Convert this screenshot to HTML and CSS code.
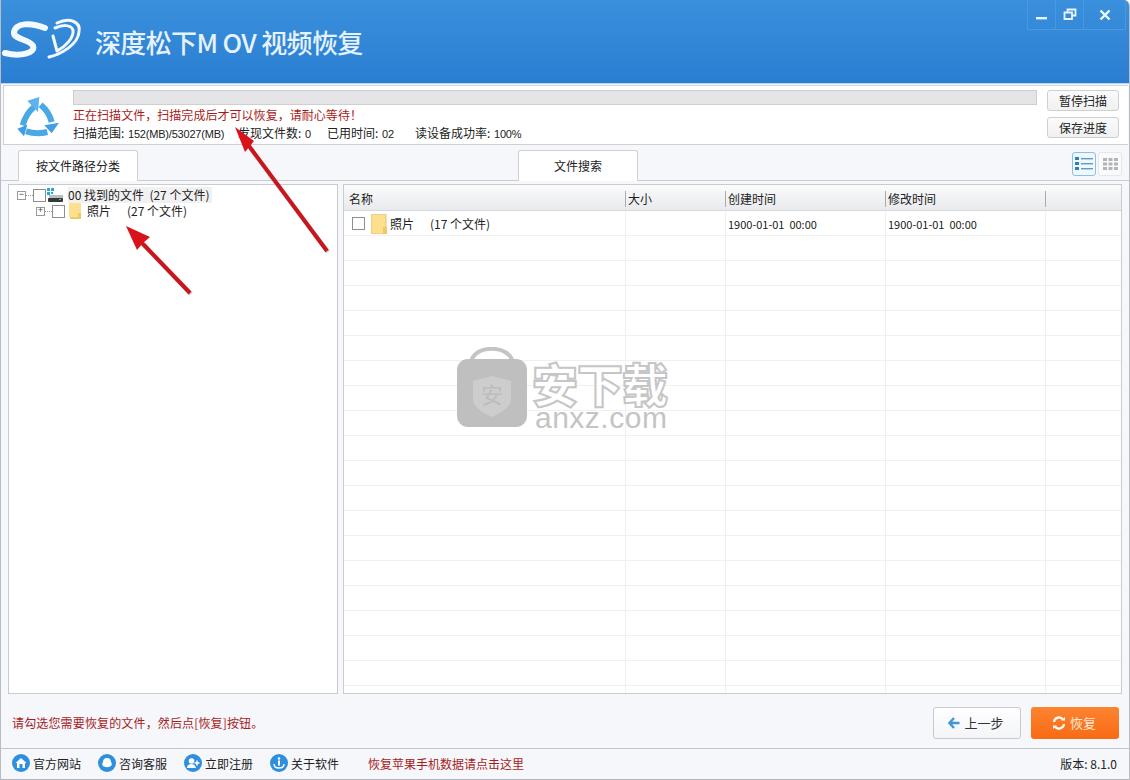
FILE: index.html
```html
<!DOCTYPE html>
<html lang="zh-CN">
<head>
<meta charset="utf-8">
<title>深度松下MOV视频恢复</title>
<link rel="stylesheet" href="styles.css">
</head>
<body>
<div class="window">
  <header class="titlebar">
    <svg class="logo" viewBox="0 0 90 55" width="90" height="55">
      <path d="M45 14C30 8 16 9 14 18C13 26 30 25 33 32C36 39 20 43 5 39" class="swoosh"/>
      <path d="M57 9C70 3 81 8 79 18C78 30 62 40 49 43" class="swoosh thin"/>
      <path d="M55 14C62 11 71 10 73 16C74 24 66 32 57 37L53 22" class="swoosh thin"/>
    </svg>
    <h1 class="app-title">深度松下M OV 视频恢复</h1>
    <div class="win-controls">
      <span class="win-btn"><svg width="14" height="14" viewBox="0 0 14 14"><rect x="1" y="9" width="11" height="2.4" fill="#e8f4ff"/></svg></span>
      <span class="win-btn"><svg width="14" height="14" viewBox="0 0 14 14"><path d="M4.5 4V1.5H12.5V7.5H9.5M1.5 4.5H9V11H1.5Z" fill="none" stroke="#e8f4ff" stroke-width="1.8"/></svg></span>
      <span class="win-btn"><svg width="14" height="14" viewBox="0 0 14 14"><path d="M2.5 2.5L11.5 11.5M11.5 2.5L2.5 11.5" stroke="#f2f9ff" stroke-width="2.4"/></svg></span>
    </div>
  </header>

  <section class="scan">
    <svg class="scan-icon" viewBox="0 0 180 156" width="60" height="52">
      <g class="recycle-stroke">
        <path d="M38 100Q48 65 72 45"/>
        <path d="M92 38Q118 60 125 90"/>
        <path d="M112 120Q80 128 48 118"/>
      </g>
      <path d="M88 15L52 26L84 60Z" fill="#5db4ec"/>
      <path d="M125 124L147 92L103 100Z" fill="#3f9fe4"/>
      <path d="M22 110L52 98L42 133Z" fill="#3f9fe4"/>
    </svg>
    <div class="scan-info">
      <div class="progress"></div>
      <p class="scan-msg">正在扫描文件，扫描完成后才可以恢复，请耐心等待！</p>
      <p class="scan-stats">
        <span class="stat-range">扫描范围: <span class="num">152(MB)/53027(MB)</span></span>
        <span class="stat-found">发现文件数: <span class="num">0</span></span>
        <span class="stat-time">已用时间: <span class="num">02</span></span>
        <span>读设备成功率: <span class="num">100%</span></span>
      </p>
    </div>
    <div class="scan-actions">
      <button class="small-btn">暂停扫描</button>
      <button class="small-btn">保存进度</button>
    </div>
  </section>

  <nav class="tabs">
    <div class="tab tab-path">按文件路径分类</div>
    <div class="tab tab-search">文件搜索</div>
    <div class="views">
      <span class="view active">
        <svg width="18" height="14" viewBox="0 0 18 14"><g fill="#2f7fb8"><rect x="0" y="0" width="4" height="3"/><rect x="0" y="5" width="4" height="3"/><rect x="0" y="10" width="4" height="3"/></g><g fill="#5b9cc9"><rect x="6" y="1" width="12" height="1.4"/><rect x="6" y="6" width="12" height="1.4"/><rect x="6" y="11" width="12" height="1.4"/></g></svg>
      </span>
      <span class="view">
        <svg width="15" height="12" viewBox="0 0 15 12"><g fill="#b4b4b4"><rect width="4" height="3"/><rect x="5.5" width="4" height="3"/><rect x="11" width="4" height="3"/><rect y="4.5" width="4" height="3"/><rect x="5.5" y="4.5" width="4" height="3"/><rect x="11" y="4.5" width="4" height="3"/><rect y="9" width="4" height="3"/><rect x="5.5" y="9" width="4" height="3"/><rect x="11" y="9" width="4" height="3"/></g></svg>
      </span>
    </div>
  </nav>

  <main class="panes">
    <aside class="tree">
      <div class="tree-row">
        <span class="expander">−</span><span class="dots"></span>
        <span class="check"></span>
        <svg class="drive" width="16" height="14" viewBox="0 0 16 14"><g fill="#2aa6d8"><rect width="3" height="3"/><rect x="4" y="0" width="3" height="3"/><rect y="4" width="3" height="3"/><rect x="4" y="4" width="2" height="2"/></g><rect x="2" y="7" width="14" height="3" fill="#b9bec2"/><rect x="1" y="10" width="15" height="4" rx="1" fill="#33393c"/><rect x="12" y="11" width="2" height="1" fill="#5fd35f"/></svg>
        <span class="tree-label sel">00 找到的文件&nbsp; (27 个文件)</span>
      </div>
      <div class="tree-row child">
        <span class="expander">+</span><span class="dots"></span>
        <span class="check"></span>
        <svg class="folder" width="13" height="16" viewBox="0 0 13 16"><path d="M0 0H12V14H0Z" fill="#fde08d"/><path d="M12 10V16H1V14H9V10Z" fill="#f1c868"/></svg>
        <span class="tree-label name">照片</span><span class="tree-label">(27 个文件)</span>
      </div>
    </aside>
    <section class="list">
      <div class="list-head">
        <span class="c1">名称</span><span class="c2">大小</span><span class="c3">创建时间</span><span class="c4">修改时间</span><span class="c5"></span>
      </div>
      <div class="list-body">
        <div class="list-row">
          <span class="c1 name-cell">
            <span class="check"></span>
            <svg class="folder" width="16" height="20" viewBox="0 0 16 20"><path d="M0 0H15V20H0Z" fill="#fde08d"/><path d="M0 0H15V20H0Z" fill="none" stroke="#e2c27a"/><path d="M16 13V20H12V13Z" fill="#f1c868"/></svg>
            <span class="file-name">照片</span><span>(17 个文件)</span>
          </span>
          <span class="c2"></span>
          <span class="c3">1900-01-01&nbsp; 00:00</span>
          <span class="c4">1900-01-01&nbsp; 00:00</span>
          <span class="c5"></span>
        </div>
      </div>
    </section>
  </main>

  <section class="actions">
    <p class="hint">请勾选您需要恢复的文件，然后点[恢复]按钮。</p>
    <div class="action-btns">
      <button class="btn prev">
        <svg width="12" height="12" viewBox="0 0 12 12"><path d="M6 1L1.5 6L6 11M2 6H11.5" fill="none" stroke="#3f97d8" stroke-width="2.4"/></svg>
        上一步
      </button>
      <button class="btn recover">
        <svg width="14" height="14" viewBox="0 0 14 14"><path d="M2 6A5 5 0 0 1 11 3.5M12 8A5 5 0 0 1 3 10.5" fill="none" stroke="#fff" stroke-width="2.2"/><path d="M9 4.5H13V1ZM5 9.5H1V13Z" fill="#fff"/></svg>
        恢复
      </button>
    </div>
  </section>

  <footer class="status">
    <a class="link"><svg width="18" height="18" viewBox="0 0 18 18"><circle cx="9" cy="9" r="9" fill="#2f8fdc"/><path d="M3.5 9L9 4L14.5 9H13V14H5V9Z" fill="#fff"/><rect x="7.5" y="10" width="3" height="4" fill="#2f8fdc"/></svg>官方网站</a>
    <a class="link"><svg width="18" height="18" viewBox="0 0 18 18"><circle cx="9" cy="9" r="9" fill="#2f8fdc"/><path d="M9 4C12 4 13 6 13 8C14 9 14 11 13 12C11 13.500 7 13.500 5 12C4 11 4 9 5 8C5 6 6 4 9 4Z" fill="#fff"/></svg>咨询客服</a>
    <a class="link"><svg width="18" height="18" viewBox="0 0 18 18"><circle cx="9" cy="9" r="9" fill="#2f8fdc"/><circle cx="7.500" cy="7" r="2.800" fill="#fff"/><path d="M3 14C3 11 5 10 7.500 10S11 11 12 14Z" fill="#fff"/><path d="M13 6.500V11.500M10.500 9H15.500" stroke="#fff" stroke-width="1.500"/></svg>立即注册</a>
    <a class="link"><svg width="18" height="18" viewBox="0 0 18 18"><circle cx="9" cy="9" r="9" fill="#2f8fdc"/><circle cx="9" cy="4.500" r="1.300" fill="#fff"/><rect x="8" y="6.500" width="2" height="5" fill="#fff"/><path d="M4 10C4 13 6 14 9 14S14 13 14 10" fill="none" stroke="#fff" stroke-width="1.400"/></svg>关于软件</a>
    <a class="apple-link">恢复苹果手机数据请点击这里</a>
    <span class="version">版本: 8.1.0</span>
  </footer>

  <div class="watermark" aria-hidden="true">
    <svg width="76" height="80" viewBox="0 0 76 80">
      <path d="M17 16C19 -3 56 -3 59 16" fill="none" stroke="#c4c4c4" stroke-width="4"/>
      <rect x="0" y="12" width="70" height="68" rx="11" fill="#bfbfbf" transform="translate(3 0)"/>
      <path d="M38 29L57 34V52C57 60 47 66 38 70C29 66 19 60 19 52V34Z" fill="#cdcdcd"/>
      <text x="38" y="56" class="wm-shield">安</text>
    </svg>
    <div class="wm-text">
      <div class="wm-cn">安下载</div>
      <div class="wm-en">anxz.com</div>
    </div>
  </div>

  <svg class="arrows" width="1130" height="780" viewBox="0 0 1130 780" aria-hidden="true">
    <g class="arrow-shadow">
      <path d="M328 252L251 149"/>
      <path d="M191 294L144 245"/>
    </g>
    <g class="arrow-line">
      <path d="M327 251L249 146"/>
      <path d="M190 293L142 243"/>
    </g>
    <path d="M235 127L254 141L250 146L245 152Z" fill="#d8141a"/>
    <path d="M126 226L150 237L143 243L137 250Z" fill="#d8141a"/>
  </svg>
</div>
</body>
</html>
```
FILE: styles.css
```css
* { box-sizing: border-box; }
html, body { margin: 0; padding: 0; }
body {
  width: 1130px;
  height: 780px;
  overflow: hidden;
  background: #fff;
  font-family: "Noto Sans CJK SC", "Noto Sans", sans-serif;
  font-size: 12px;
  color: #222;
}
p, h1 { margin: 0; font-weight: normal; }

.window {
  position: relative;
  width: 1130px;
  height: 780px;
  display: flex;
  flex-direction: column;
  background: #f5f7fb;
  border-left: 1px solid #b9bcc2;
  border-right: 1px solid #b9bcc2;
  border-bottom: 1px solid #b4b7bd;
  border-top-right-radius: 6px;
  overflow: hidden;
}

.titlebar {
  flex: none;
  height: 84px;
  display: flex;
  align-items: center;
  position: relative;
  background: linear-gradient(#3a90dc, #2a7ed2);
  border-bottom: 1px solid #b8d2ea;
}
.logo { flex: none; margin: 0 0 0 -1px; }
.swoosh { fill: none; stroke: #f2f9ff; stroke-width: 6; stroke-linecap: round; stroke-linejoin: round; }
.thin { stroke-width: 3; }
.app-title {
  margin-left: 5px;
  font-size: 26px;
  font-weight: 500;
  color: #e6f2fc;
  letter-spacing: -0.65px;
  white-space: nowrap;
}
.win-controls {
  position: absolute;
  top: 0;
  right: 3px;
  display: flex;
  height: 30px;
  border: 1px solid #4a98de;
  border-top: 0;
}
.win-btn {
  width: 28px;
  display: flex;
  align-items: center;
  justify-content: center;
  border-right: 1px solid #4a98de;
}
.win-btn:last-child { width: 41px; border-right: 0; }

.scan {
  flex: none;
  height: 60px;
  margin: 1px 1px 0 2px;
  display: flex;
  background: #fff;
  border: 1px solid #d0d0d0;
  border-width: 1px 0 1px 1px;
  position: relative;
}
.scan-icon { flex: none; margin: 6px 0 0 6px; }
.scan-info { flex: none; width: 964px; margin-left: 3px; padding-top: 4px; }
.progress { height: 15px; background: #e5e4e6; border: 1px solid #cfcfcf; }
.scan-msg { margin-top: 1px; color: #a81b1b; font-size: 12px; line-height: 17px; letter-spacing: 0.04px; }
.scan-stats { display: flex; font-size: 12px; line-height: 17px; margin-top: 1px; white-space: nowrap; }
.num { font-family: "Liberation Sans", sans-serif; font-size: 11px; letter-spacing: -0.2px; margin-left: 1px; }
.stat-range { width: 165px; }
.stat-found { width: 89px; }
.stat-time { width: 88px; }
.scan-actions {
  flex: none;
  margin-left: 10px;
  padding-top: 4px;
  display: flex;
  flex-direction: column;
  gap: 6px;
}
.small-btn {
  width: 72px;
  height: 21px;
  padding: 0;
  font: 12px "Noto Sans CJK SC", sans-serif;
  color: #222;
  background: linear-gradient(#fbfbfb, #f0f0f0);
  border: 1px solid #cfcfcf;
  border-radius: 3px;
}

.tabs {
  flex: none;
  height: 36px;
  display: flex;
  align-items: flex-end;
  padding-left: 17px;
  border-bottom: 1px solid #c9cbce;
  position: relative;
}
.tab {
  width: 120px;
  height: 31px;
  margin-bottom: -1px;
  text-align: center;
  line-height: 30px;
  background: #fff;
  border: 1px solid #cfd1d4;
  border-bottom: 0;
  border-radius: 3px 3px 0 0;
}
.tab-search { margin-left: 380px; }
.views {
  position: absolute;
  right: 7px;
  top: 7px;
  display: flex;
  gap: 2px;
}
.view {
  width: 24px;
  height: 24px;
  display: flex;
  align-items: center;
  justify-content: center;
  background: #fafbfd;
  border: 1px solid #e4e6ea;
  border-radius: 3px;
}
.view.active { background: #f1f8fd; border-color: #8cbfe0; }

.panes {
  flex: none;
  height: 513px;
  display: flex;
  gap: 5px;
  padding: 3px 7px 0 7px;
}
.tree {
  flex: none;
  width: 330px;
  background: #fff;
  border: 1px solid #c9cbce;
  padding: 2px 0 0 8px;
}
.tree-row { display: flex; align-items: center; height: 16px; white-space: nowrap; }
.tree-row.child { padding-left: 19px; }
.expander {
  width: 9px;
  height: 9px;
  border: 1px solid #9a9a9a;
  font-size: 9px;
  line-height: 6px;
  text-align: center;
  color: #444;
  font-family: "Liberation Mono", monospace;
  flex: none;
}
.dots { width: 7px; border-top: 1px dotted #999; flex: none; }
.check {
  flex: none;
  width: 13px;
  height: 13px;
  background: #fff;
  border: 1px solid #8e8e8e;
  margin-right: 2px;
}
.drive { flex: none; margin: 0 5px 0 -1px; }
.tree-row .folder { flex: none; margin: 0 5px 0 2px; }
.tree-label { line-height: 16px; font-size: 12px; }
.tree-label.sel { background: #f1f1f1; padding-right: 2px; }
.tree-label.name { width: 40px; }

.list {
  flex: none;
  width: 779px;
  background: #fff;
  border: 1px solid #c9cbce;
  display: flex;
  flex-direction: column;
}
.list-head, .list-row { display: grid; grid-template-columns: 282px 100px 160px 160px 75px; }
.list-head {
  flex: none;
  height: 26px;
  background: linear-gradient(#fbfbfc, #e8eaed);
  border-bottom: 1px solid #d6d8db;
  line-height: 26px;
}
.list-head span { padding-left: 2px; border-right: 1px solid #a9abae; height: 16px; line-height: 16px; margin-top: 6px; }
.list-head .c1 { padding-left: 5px; }
.list-head .c5 { border-right: 0; }
.list-body {
  flex: 1;
  min-height: 0;
  overflow: hidden;
  background-color: #fff;
  background-image:
    linear-gradient(#eef0f2, #eef0f2),
    linear-gradient(#eef0f2, #eef0f2),
    linear-gradient(#eef0f2, #eef0f2),
    linear-gradient(#eef0f2, #eef0f2),
    repeating-linear-gradient(to bottom, transparent 0 24px, #eef0f2 24px 25px);
  background-size: 1px 100%, 1px 100%, 1px 100%, 1px 100%, 100% 100%;
  background-position: 281px 0, 381px 0, 541px 0, 701px 0, 0 0;
  background-repeat: no-repeat;
}
.list-row { height: 25px; font-size: 11px; align-items: center; }
.list-row .c3, .list-row .c4 { padding-left: 2px; }
.name-cell { display: flex; align-items: center; padding-left: 8px; font-size: 12px; white-space: nowrap; }
.name-cell .check { margin-right: 6px; }
.name-cell .folder { flex: none; margin-right: 3px; }
.file-name { width: 40px; }

.actions {
  flex: none;
  height: 55px;
  display: flex;
  align-items: center;
  justify-content: space-between;
  padding: 3px 10px 0 11px;
  border-bottom: 1px solid #c2c5ca;
}
.hint { color: #a81b1b; font-size: 12px; letter-spacing: 0.15px; }
.action-btns { display: flex; gap: 10px; }
.btn {
  width: 88px;
  height: 32px;
  padding: 0 2px 0 0;
  display: flex;
  align-items: center;
  justify-content: center;
  gap: 4px;
  font: 13px "Noto Sans CJK SC", sans-serif;
  border-radius: 3px;
}
.prev { background: linear-gradient(#fefefe, #f4f5f8); border: 1px solid #c8cace; color: #333; }
.recover { background: linear-gradient(#fd8430, #f96a15); border: 0; color: #fde8d4; }

.status {
  flex: 1;
  display: flex;
  align-items: center;
  padding: 0 12px 2px 11px;
  white-space: nowrap;
}
.link { display: flex; align-items: center; gap: 3px; width: 86px; color: #222; }
.apple-link { margin-left: 12px; color: #a81b1b; font-size: 12px; }
.version { margin-left: auto; font-size: 12px; }

.watermark {
  position: absolute;
  left: 453px;
  top: 347px;
  display: flex;
  gap: 2px;
  pointer-events: none;
}
.wm-shield { font-size: 22px; fill: #bdbdbd; text-anchor: middle; }
.wm-text { margin-top: 13px; }
.wm-cn {
  height: 44px;
  font-size: 46px;
  line-height: 44px;
  font-weight: 900;
  color: #fff;
  -webkit-text-stroke: 2px #c6c6c6;
  letter-spacing: -1px;
  white-space: nowrap;
}
.wm-en {
  font-family: "Liberation Sans", sans-serif;
  font-size: 30px;
  line-height: 28px;
  color: #c4c4c4;
  white-space: nowrap;
  letter-spacing: 0.5px;
  margin-left: 3px;
}

.arrows { position: absolute; left: -1px; top: 0; pointer-events: none; }
.arrow-shadow path { stroke: #9b9b9b; stroke-width: 4.5; fill: none; opacity: 0.55; }
.arrow-line path { stroke: #c8161c; stroke-width: 4; fill: none; }
.recycle-stroke path { stroke: #4aa8e6; stroke-width: 18; fill: none; }
```
